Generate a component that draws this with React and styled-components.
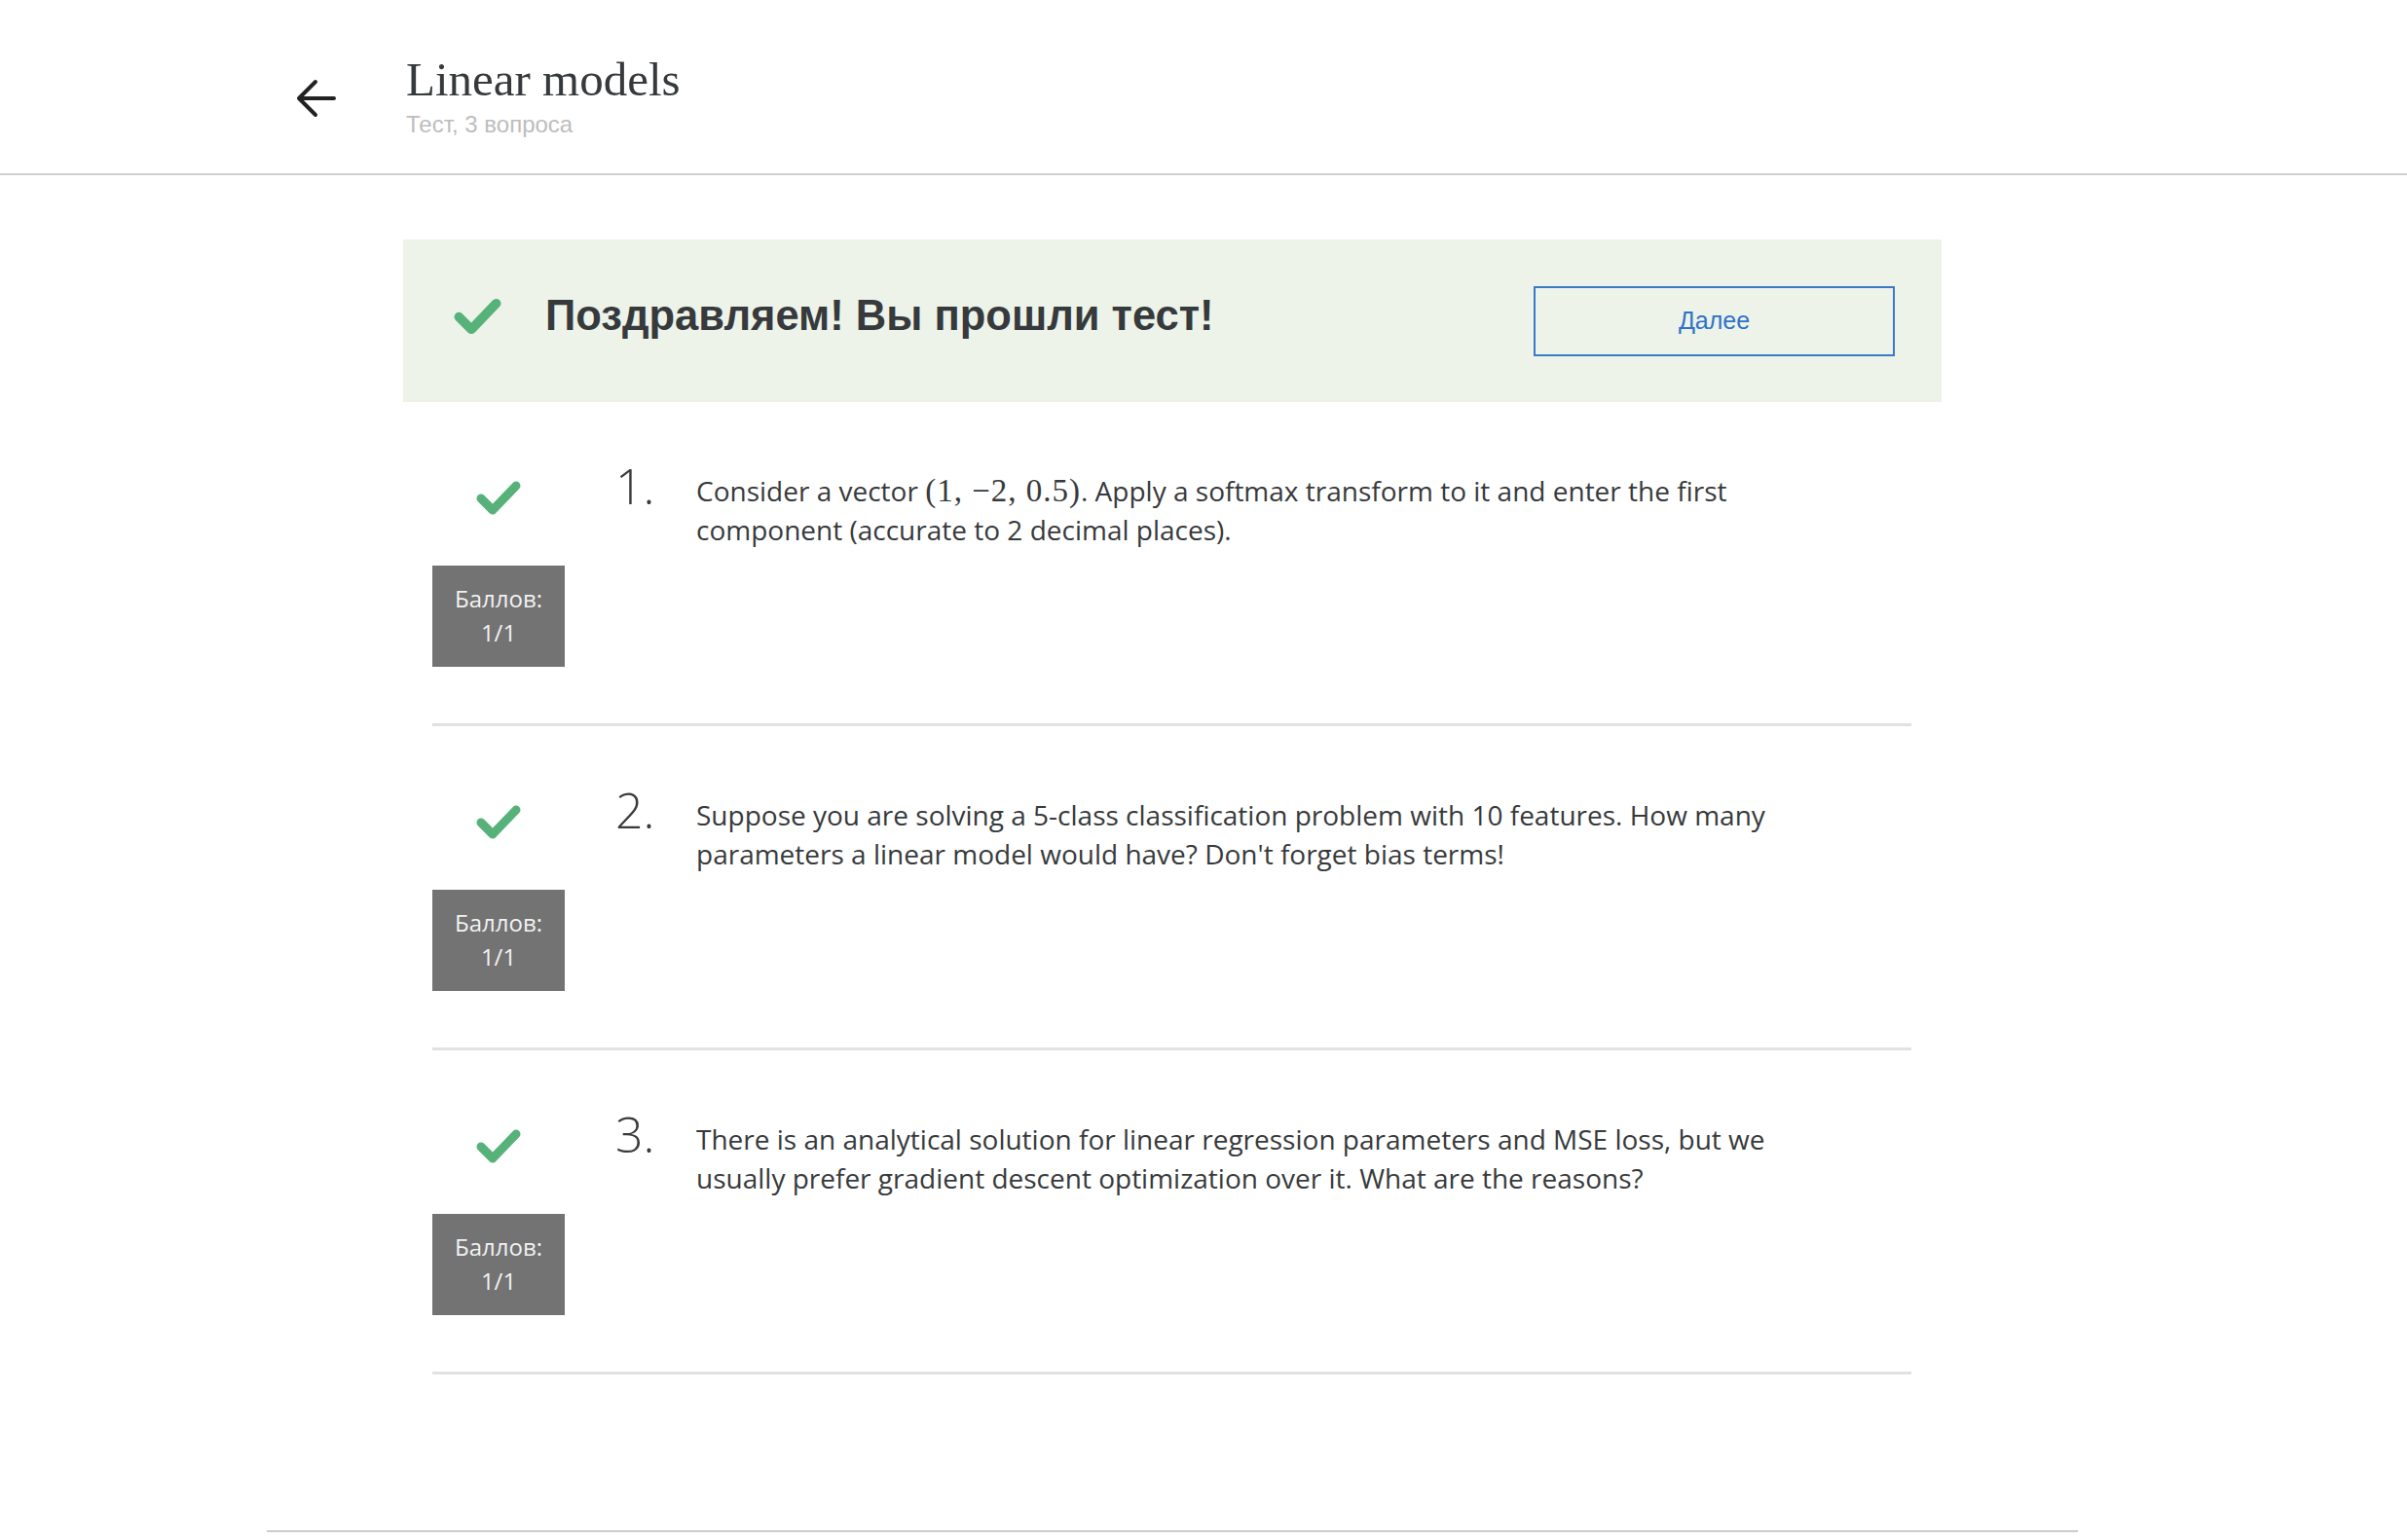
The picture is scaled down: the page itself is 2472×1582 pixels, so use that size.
import React from 'react';
import styled, { createGlobalStyle } from 'styled-components';

const GlobalStyle = createGlobalStyle`
  html, body {
    margin: 0;
    padding: 0;
    background: #fff;
  }
  body {
    font-family: 'Open Sans', 'Liberation Sans', sans-serif;
    color: #373a3c;
  }
`;

const Header = styled.header`
  border-bottom: 2px solid #cfcfcf;
`;

const Wrapper = styled.div`
  width: 1860px;
  margin-left: 274px;
`;

const HeaderInner = styled.div`
  display: flex;
  align-items: flex-start;
  gap: 70px;
  padding: 54px 0 35px 29px;
`;

const BackButton = styled.button`
  display: flex;
  border: 0;
  background: none;
  padding: 0;
  margin-top: 26px;
  cursor: pointer;
`;

const TitleBlock = styled.div`
  display: flex;
  flex-direction: column;
  gap: 3px;
`;

const Title = styled.h1`
  margin: 0;
  font-family: 'Liberation Serif', serif;
  font-weight: 400;
  font-size: 49px;
  line-height: 56px;
  color: #373a3c;
`;

const Subtitle = styled.div`
  font-family: 'Liberation Sans', Arial, sans-serif;
  font-size: 24px;
  line-height: 30px;
  color: #bdbdbd;
`;

const Main = styled.main`
  padding: 66px 140px 0;
`;

const Banner = styled.section`
  display: flex;
  align-items: center;
  height: 167px;
  padding: 0 48px 0 52px;
  background: #edf3e9;
`;

const BannerCheck = styled.span`
  display: flex;
  margin-bottom: 10px;
`;

const BannerText = styled.h2`
  flex: 1;
  margin: 0 0 12px 45px;
  font-family: 'Liberation Sans', Arial, sans-serif;
  font-weight: 700;
  font-size: 43.5px;
  line-height: 52px;
  color: #373a3c;
`;

const NextButton = styled.button`
  width: 371px;
  height: 72px;
  border: 2px solid #3a78c9;
  background: transparent;
  font-family: 'Liberation Sans', Arial, sans-serif;
  font-size: 25px;
  color: #2f72c8;
  cursor: pointer;
`;

const QuestionList = styled.div`
  padding: 0 31px 0 30px;
`;

const Question = styled.div`
  display: flex;
  align-items: flex-start;
  padding: 61px 95px 58px 0;
  border-bottom: 3px solid #e1e1e1;
`;

const Status = styled.div`
  display: flex;
  flex-direction: column;
  align-items: center;
  gap: 52px;
  width: 136px;
  margin-top: 20px;
  flex-shrink: 0;
`;

const Score = styled.div`
  width: 136px;
  height: 104px;
  box-sizing: border-box;
  padding: 16px 0 18px;
  background: #737373;
  color: #f2f2f2;
  font-size: 24px;
  line-height: 35px;
  text-align: center;
`;

const Number = styled.div`
  width: 83px;
  margin-left: 52px;
  flex-shrink: 0;
  font-size: 50px;
  font-weight: 300;
  line-height: 50px;
  color: #3a3a3a;
`;

const Text = styled.p`
  flex: 1;
  margin: 10px 0 0;
  font-size: 28px;
  line-height: 40px;
  color: #373a3c;
`;

const Math = styled.span`
  font-family: 'Liberation Serif', 'DejaVu Serif', serif;
  font-size: 33px;
  letter-spacing: 1px;
`;

const FooterLine = styled.div`
  margin-top: 160px;
  border-top: 2px solid #cccccc;
`;

const Check = ({ width = 46, height = 35 }) => (
  <svg width={width} height={height} viewBox="0 0 46 35" fill="none">
    <polyline
      points="5,18 17,30 41,5"
      stroke="#57b27a"
      strokeWidth="9"
      strokeLinecap="round"
      strokeLinejoin="round"
    />
  </svg>
);

const ArrowLeft = () => (
  <svg width="44" height="42" viewBox="0 0 44 42" fill="none">
    <path
      d="M40 21H4M21 4L4 21L21 38"
      stroke="#222"
      strokeWidth="4"
      strokeLinecap="round"
      strokeLinejoin="round"
    />
  </svg>
);

const questions = [
  {
    id: 1,
    text: (
      <>
        Consider a vector <Math>(1, −2, 0.5)</Math>. Apply a softmax transform to it and enter the first
        component (accurate to 2 decimal places).
      </>
    ),
  },
  {
    id: 2,
    text: "Suppose you are solving a 5-class classification problem with 10 features. How many parameters a linear model would have? Don't forget bias terms!",
  },
  {
    id: 3,
    text: 'There is an analytical solution for linear regression parameters and MSE loss, but we usually prefer gradient descent optimization over it. What are the reasons?',
  },
];

const App = () => (
  <>
    <GlobalStyle />
    <Header>
      <Wrapper>
        <HeaderInner>
          <BackButton aria-label="Назад">
            <ArrowLeft />
          </BackButton>
          <TitleBlock>
            <Title>Linear models</Title>
            <Subtitle>Тест, 3 вопроса</Subtitle>
          </TitleBlock>
        </HeaderInner>
      </Wrapper>
    </Header>
    <Wrapper>
      <Main>
        <Banner>
          <BannerCheck>
            <Check width={49} height={38} />
          </BannerCheck>
          <BannerText>Поздравляем! Вы прошли тест!</BannerText>
          <NextButton>Далее</NextButton>
        </Banner>
        <QuestionList>
          {questions.map((q) => (
            <Question key={q.id}>
              <Status>
                <Check />
                <Score>
                  Баллов:
                  <br />
                  1/1
                </Score>
              </Status>
              <Number>{q.id}.</Number>
              <Text>{q.text}</Text>
            </Question>
          ))}
        </QuestionList>
      </Main>
      <FooterLine />
    </Wrapper>
  </>
);

export default App;
